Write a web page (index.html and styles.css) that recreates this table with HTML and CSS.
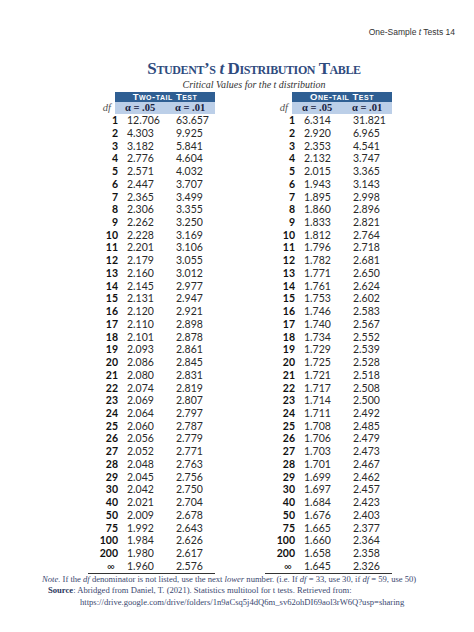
FILE: index.html
```html
<!DOCTYPE html>
<html>
<head>
<meta charset="utf-8">
<link rel="stylesheet" href="styles.css">
</head>
<body>
<div class="page">
  <div class="running-head">One-Sample <i>t</i> Tests 14</div>
  <div class="heading">
    <h1 class="title">Student’s <i>t</i> Distribution Table</h1>
    <div class="subtitle">Critical Values for the t distribution</div>
  </div>
  <div class="tables">
    <div class="tbl">
      <div class="bar-row"><div class="bar">Two-tail Test</div></div>
      <div class="alpha-row"><span class="df-label">df</span><span class="a1">α = .05</span><span class="a2">α = .01</span></div>
      <div class="row"><b>1</b><span>12.706</span><span>63.657</span></div>
      <div class="row"><b>2</b><span>4.303</span><span>9.925</span></div>
      <div class="row"><b>3</b><span>3.182</span><span>5.841</span></div>
      <div class="row"><b>4</b><span>2.776</span><span>4.604</span></div>
      <div class="row"><b>5</b><span>2.571</span><span>4.032</span></div>
      <div class="row"><b>6</b><span>2.447</span><span>3.707</span></div>
      <div class="row"><b>7</b><span>2.365</span><span>3.499</span></div>
      <div class="row"><b>8</b><span>2.306</span><span>3.355</span></div>
      <div class="row"><b>9</b><span>2.262</span><span>3.250</span></div>
      <div class="row"><b>10</b><span>2.228</span><span>3.169</span></div>
      <div class="row"><b>11</b><span>2.201</span><span>3.106</span></div>
      <div class="row"><b>12</b><span>2.179</span><span>3.055</span></div>
      <div class="row"><b>13</b><span>2.160</span><span>3.012</span></div>
      <div class="row"><b>14</b><span>2.145</span><span>2.977</span></div>
      <div class="row"><b>15</b><span>2.131</span><span>2.947</span></div>
      <div class="row"><b>16</b><span>2.120</span><span>2.921</span></div>
      <div class="row"><b>17</b><span>2.110</span><span>2.898</span></div>
      <div class="row"><b>18</b><span>2.101</span><span>2.878</span></div>
      <div class="row"><b>19</b><span>2.093</span><span>2.861</span></div>
      <div class="row"><b>20</b><span>2.086</span><span>2.845</span></div>
      <div class="row"><b>21</b><span>2.080</span><span>2.831</span></div>
      <div class="row"><b>22</b><span>2.074</span><span>2.819</span></div>
      <div class="row"><b>23</b><span>2.069</span><span>2.807</span></div>
      <div class="row"><b>24</b><span>2.064</span><span>2.797</span></div>
      <div class="row"><b>25</b><span>2.060</span><span>2.787</span></div>
      <div class="row"><b>26</b><span>2.056</span><span>2.779</span></div>
      <div class="row"><b>27</b><span>2.052</span><span>2.771</span></div>
      <div class="row"><b>28</b><span>2.048</span><span>2.763</span></div>
      <div class="row"><b>29</b><span>2.045</span><span>2.756</span></div>
      <div class="row"><b>30</b><span>2.042</span><span>2.750</span></div>
      <div class="row"><b>40</b><span>2.021</span><span>2.704</span></div>
      <div class="row"><b>50</b><span>2.009</span><span>2.678</span></div>
      <div class="row"><b>75</b><span>1.992</span><span>2.643</span></div>
      <div class="row"><b>100</b><span>1.984</span><span>2.626</span></div>
      <div class="row"><b>200</b><span>1.980</span><span>2.617</span></div>
      <div class="row last"><b class="inf">∞</b><span>1.960</span><span>2.576</span></div>
    </div>
    <div class="tbl">
      <div class="bar-row"><div class="bar">One-tail Test</div></div>
      <div class="alpha-row"><span class="df-label">df</span><span class="a1">α = .05</span><span class="a2">α = .01</span></div>
      <div class="row"><b>1</b><span>6.314</span><span>31.821</span></div>
      <div class="row"><b>2</b><span>2.920</span><span>6.965</span></div>
      <div class="row"><b>3</b><span>2.353</span><span>4.541</span></div>
      <div class="row"><b>4</b><span>2.132</span><span>3.747</span></div>
      <div class="row"><b>5</b><span>2.015</span><span>3.365</span></div>
      <div class="row"><b>6</b><span>1.943</span><span>3.143</span></div>
      <div class="row"><b>7</b><span>1.895</span><span>2.998</span></div>
      <div class="row"><b>8</b><span>1.860</span><span>2.896</span></div>
      <div class="row"><b>9</b><span>1.833</span><span>2.821</span></div>
      <div class="row"><b>10</b><span>1.812</span><span>2.764</span></div>
      <div class="row"><b>11</b><span>1.796</span><span>2.718</span></div>
      <div class="row"><b>12</b><span>1.782</span><span>2.681</span></div>
      <div class="row"><b>13</b><span>1.771</span><span>2.650</span></div>
      <div class="row"><b>14</b><span>1.761</span><span>2.624</span></div>
      <div class="row"><b>15</b><span>1.753</span><span>2.602</span></div>
      <div class="row"><b>16</b><span>1.746</span><span>2.583</span></div>
      <div class="row"><b>17</b><span>1.740</span><span>2.567</span></div>
      <div class="row"><b>18</b><span>1.734</span><span>2.552</span></div>
      <div class="row"><b>19</b><span>1.729</span><span>2.539</span></div>
      <div class="row"><b>20</b><span>1.725</span><span>2.528</span></div>
      <div class="row"><b>21</b><span>1.721</span><span>2.518</span></div>
      <div class="row"><b>22</b><span>1.717</span><span>2.508</span></div>
      <div class="row"><b>23</b><span>1.714</span><span>2.500</span></div>
      <div class="row"><b>24</b><span>1.711</span><span>2.492</span></div>
      <div class="row"><b>25</b><span>1.708</span><span>2.485</span></div>
      <div class="row"><b>26</b><span>1.706</span><span>2.479</span></div>
      <div class="row"><b>27</b><span>1.703</span><span>2.473</span></div>
      <div class="row"><b>28</b><span>1.701</span><span>2.467</span></div>
      <div class="row"><b>29</b><span>1.699</span><span>2.462</span></div>
      <div class="row"><b>30</b><span>1.697</span><span>2.457</span></div>
      <div class="row"><b>40</b><span>1.684</span><span>2.423</span></div>
      <div class="row"><b>50</b><span>1.676</span><span>2.403</span></div>
      <div class="row"><b>75</b><span>1.665</span><span>2.377</span></div>
      <div class="row"><b>100</b><span>1.660</span><span>2.364</span></div>
      <div class="row"><b>200</b><span>1.658</span><span>2.358</span></div>
      <div class="row last"><b class="inf">∞</b><span>1.645</span><span>2.326</span></div>
    </div>
  </div>
  <div class="notes">
    <div class="note"><i>Note.</i> If the <i>df</i> denominator is not listed, use the next <i>lower</i> number. (i.e. If <i>df</i> = 33, use 30, if <i>df</i> = 59, use 50)</div>
    <div class="source"><b>Source</b>: Abridged from Daniel, T. (2021). Statistics multitool for t tests. Retrieved from:</div>
    <div class="url">https://drive.google.com/drive/folders/1n9aCsq5j4dQ6m_sv62ohDI69aol3rW6Q?usp=sharing</div>
  </div>
</div>
</body>
</html>
```

FILE: styles.css
```css
html, body {
  margin: 0;
  padding: 0;
  background: #ffffff;
}

.page {
  width: 474px;
  height: 632px;
  overflow: hidden;
}

.running-head {
  padding: 27px 19px 0 0;
  height: 10px;
  text-align: right;
  font-family: "Liberation Sans", Arial, sans-serif;
  font-size: 8.5px;
  line-height: 10px;
  color: #333333;
}

.heading {
  padding-left: 34px;
  text-align: center;
  margin-top: 23px;
}

.title {
  margin: 0;
  height: 18px;
  font-family: "Liberation Serif", "Times New Roman", serif;
  font-variant: small-caps;
  font-weight: bold;
  font-size: 17px;
  line-height: 18px;
  letter-spacing: -0.4px;
  color: #2f4b7e;
}

.title i {
  font-variant: normal;
}

.subtitle {
  margin-top: 1px;
  height: 11px;
  font-family: "Liberation Serif", "Times New Roman", serif;
  font-style: italic;
  font-size: 10px;
  line-height: 11px;
  color: #333333;
}

.tables {
  display: flex;
  gap: 50px;
  padding-left: 88px;
  margin-top: 2px;
}

.tbl {
  width: 127px;
}

.bar-row {
  padding-left: 27px;
}

.bar {
  height: 10px;
  background: #2f5f93;
  color: #ffffff;
  font-family: "Liberation Sans", Arial, sans-serif;
  font-weight: bold;
  font-variant: small-caps;
  font-size: 9.5px;
  line-height: 10px;
  text-align: center;
  letter-spacing: 0.5px;
  overflow: hidden;
}

.alpha-row {
  display: grid;
  grid-template-columns: 27px 6px 49px 45px;
  height: 12.1px;
  line-height: 12.1px;
}

.df-label {
  grid-column: 1;
  text-align: right;
  padding-right: 4px;
  font-family: "Liberation Serif", "Times New Roman", serif;
  font-style: italic;
  font-size: 10.5px;
  color: #555555;
}

.a1, .a2 {
  background: #bccfe8;
  font-family: "Liberation Serif", "Times New Roman", serif;
  font-weight: bold;
  font-size: 10.5px;
  color: #16213e;
}

.a1 {
  grid-column: 2 / 4;
  padding-left: 10px;
}

.a2 {
  grid-column: 4;
  padding-left: 5px;
}

.row {
  display: grid;
  grid-template-columns: 30px 52px 45px;
  height: 12.74px;
  line-height: 12.74px;
  font-family: Lato, "Liberation Sans", sans-serif;
  font-size: 10.5px;
  color: #2a2a2a;
}

.row b {
  text-align: right;
  font-weight: bold;
  color: #111111;
}

.row span {
  padding-left: 9px;
}

.row span + span {
  padding-left: 6px;
}

.row b.inf {
  font-weight: normal;
  padding-right: 3px;
}

.row.last {
  border-bottom: 1px solid #333333;
}

.notes {
  font-family: "Liberation Serif", "Times New Roman", serif;
  font-size: 8.6px;
  line-height: 11.5px;
  color: #3a4870;
  white-space: nowrap;
}

.note {
  padding-left: 42px;
}

.source {
  padding-left: 48px;
}

.source b {
  color: #2a365c;
}

.url {
  padding-left: 80px;
}
```
